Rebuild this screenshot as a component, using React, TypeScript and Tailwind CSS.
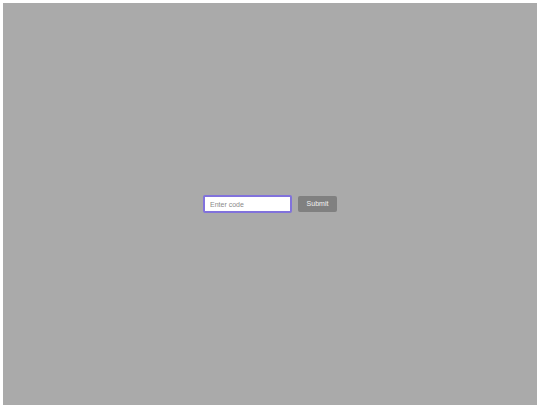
import React from "react";

export default function App() {
  return (
    <div className="bg-white px-[3px] pt-[3px] h-[405px] overflow-hidden" style={{ fontFamily: '"Liberation Sans", Arial, sans-serif' }}>
      <div className="h-[402px] bg-[#aaaaaa] flex items-center justify-center gap-[6px]">
        <input
          type="text"
          placeholder="Enter code"
          className="w-[89px] h-[18px] bg-white border-2 border-[#8172dc] rounded-[2px] pl-[5px] text-[7px] text-[#333] placeholder:text-[#8a8a8a] outline-none"
        />
        <button className="w-[39px] h-[16px] bg-[#808080] text-[#f2f2f2] text-[7px] rounded-[2px] flex items-center justify-center">
          Submit
        </button>
      </div>
    </div>
  );
}
